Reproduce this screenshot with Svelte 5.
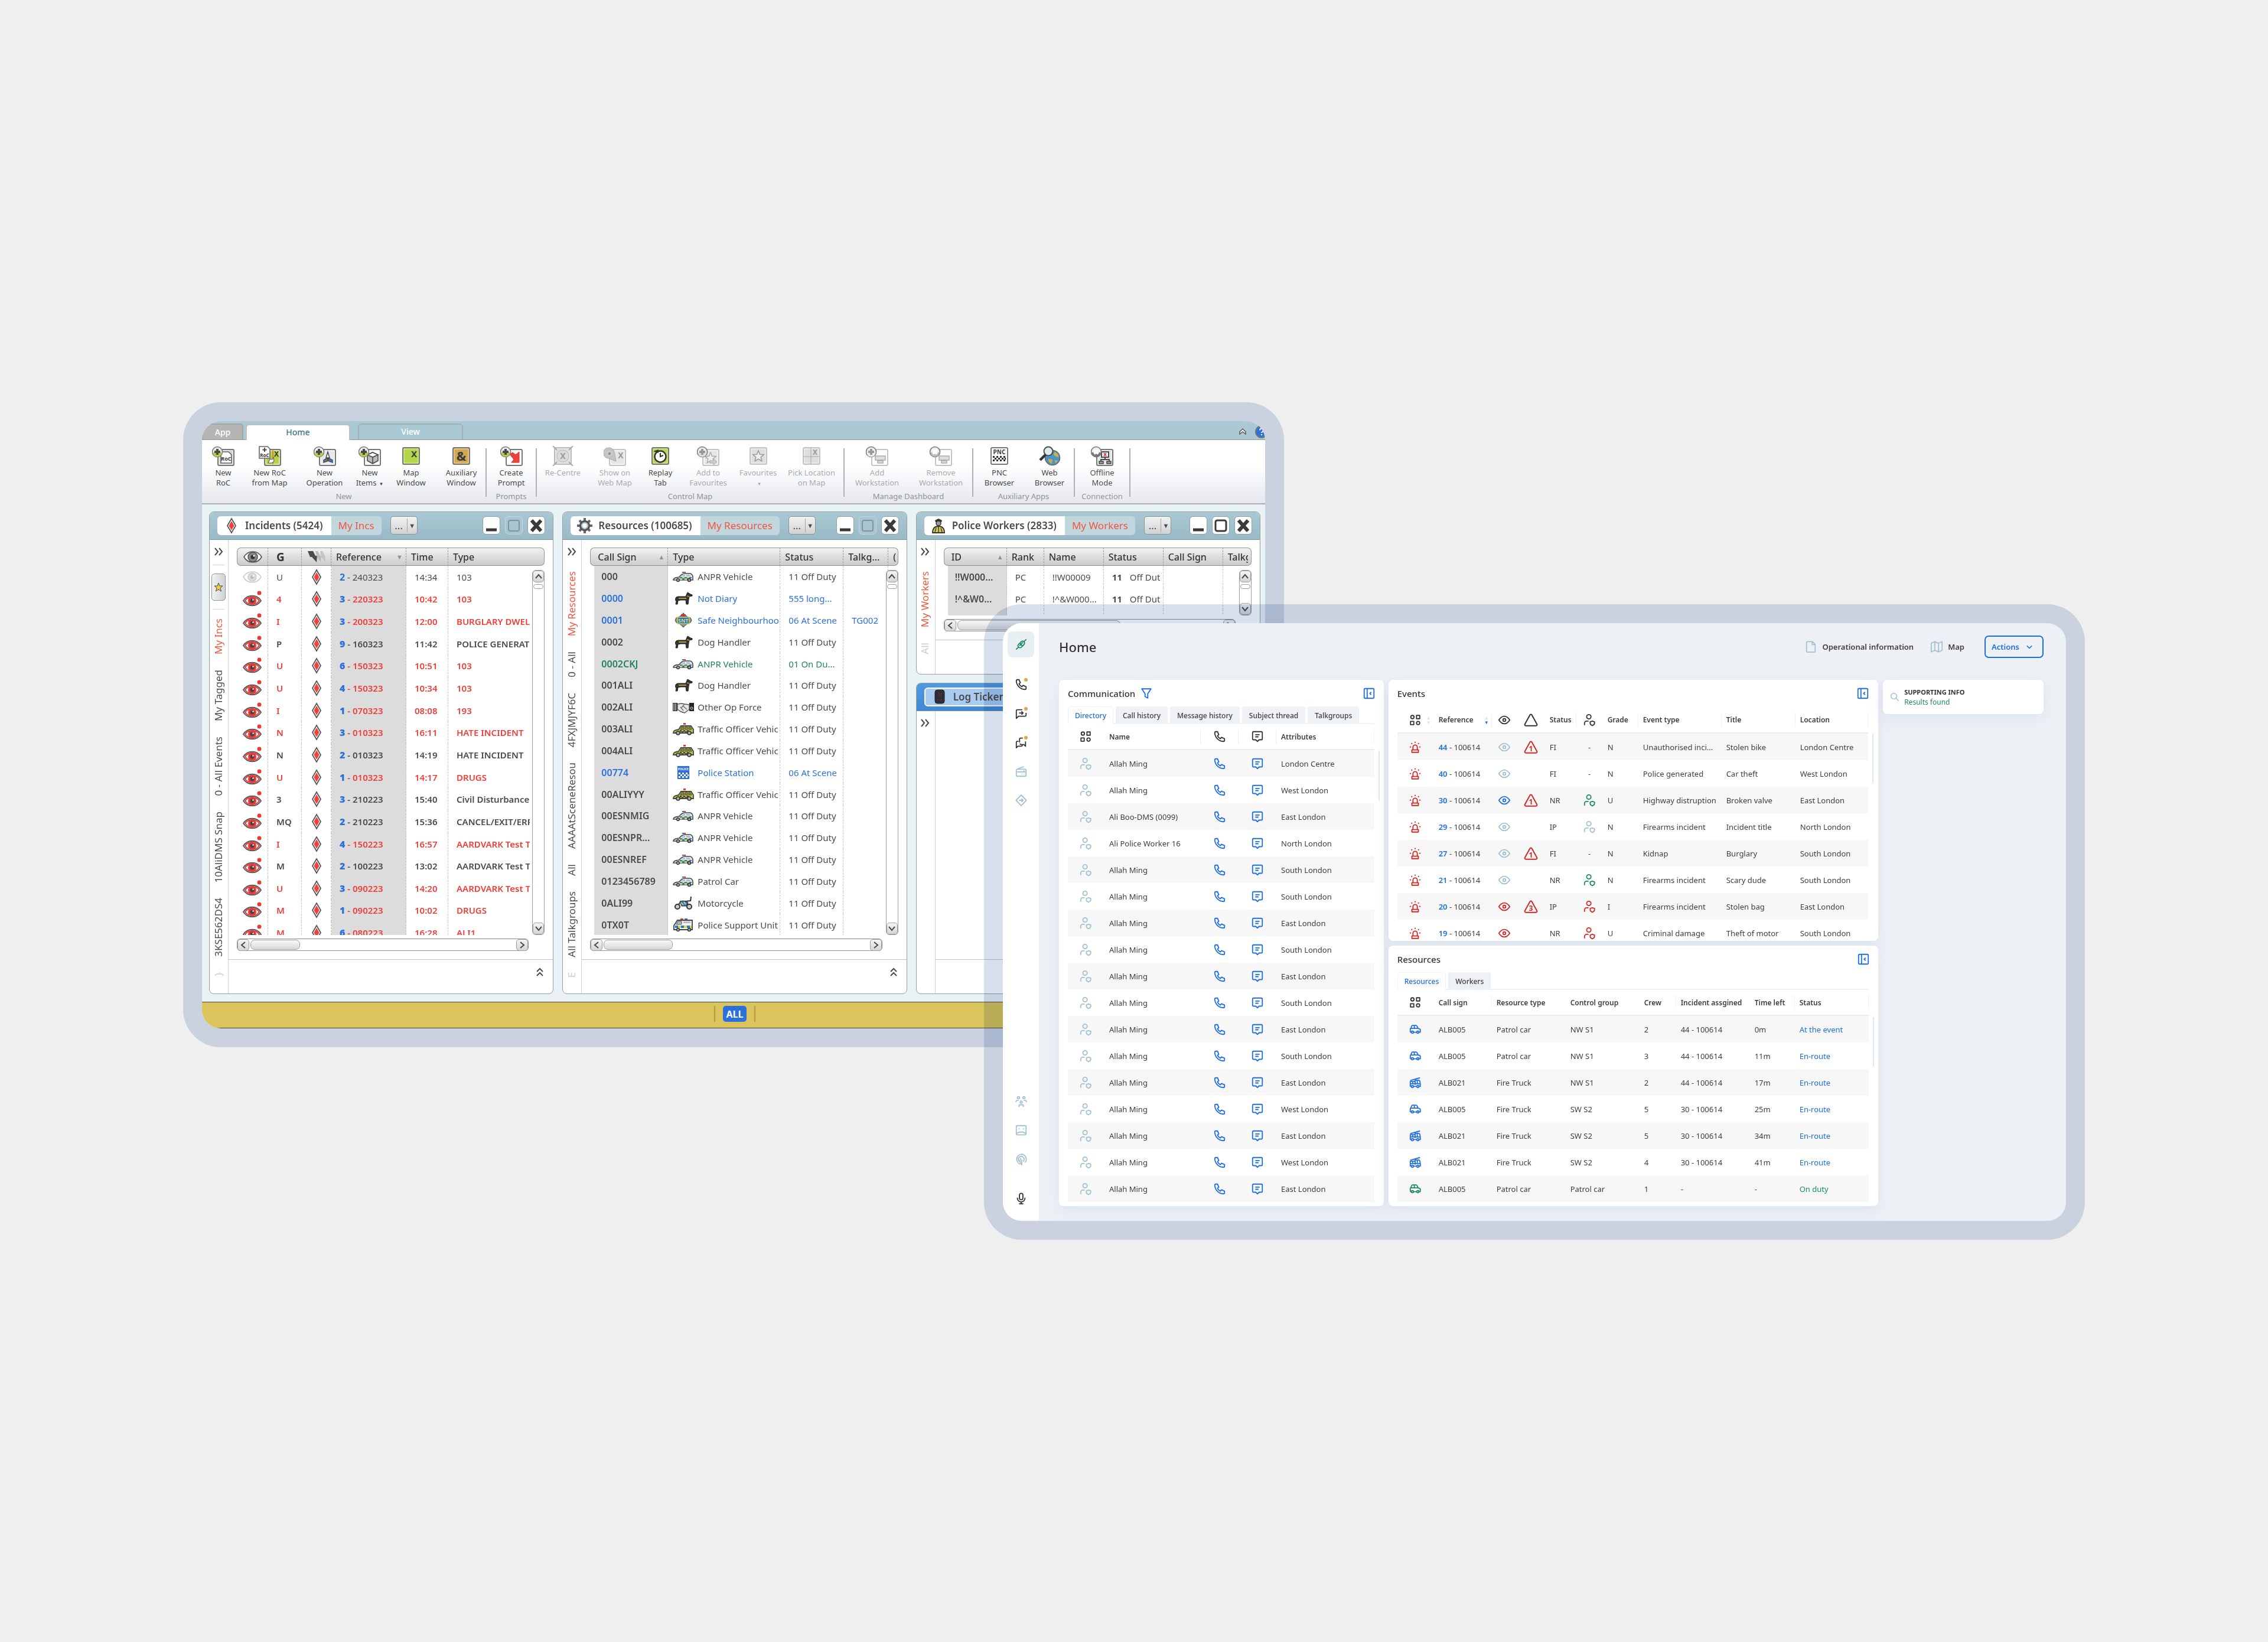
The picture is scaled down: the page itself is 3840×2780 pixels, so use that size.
<script lang="ts">
    type Shape = { d?: string; f?: string; s?: string; w?: number; t?: string; x?: number; y?: number; size?: number }

    const dark = "#4a4a4a"

    const box = (x: number, y: number, w: number, h: number, r: number) =>
        `M${x + r} ${y}h${w - 2 * r}a${r} ${r} 0 0 1 ${r} ${r}v${h - 2 * r}a${r} ${r} 0 0 1 ${-r} ${r}h${2 * r - w}a${r} ${r} 0 0 1 ${-r} ${-r}v${2 * r - h}a${r} ${r} 0 0 1 ${r} ${-r}z`
    const dot = (x: number, y: number, r: number) =>
        `M${x - r} ${y}a${r} ${r} 0 1 0 ${2 * r} 0a${r} ${r} 0 1 0 ${-2 * r} 0z`

    // Ribbon icons, 38 x 34
    const tile = (fill: string, stroke = "#777"): Shape[] => [
        { d: box(10, 6, 27, 27, 2), f: fill, s: stroke, w: 2 },
        { d: box(12, 8, 23, 23, 1), s: "#fff", w: 1 },
    ]
    const solo = (fill: string, stroke = "#777"): Shape[] => [
        { d: box(5, 3, 28, 28, 2), f: fill, s: stroke, w: 2 },
        { d: box(7, 5, 24, 24, 1), s: "#ffffff99", w: 1 },
    ]
    const badge = (low: string, ink: string, sign: string): Shape[] => [
        { d: dot(9, 10, 8.5), f: "#eee", s: "#777", w: 1.6 },
        { d: "M1.5 11a7.5 7.5 0 0 0 15 0z", f: low },
        { d: sign, s: ink, w: 4 },
    ]
    const plus = "M9 5v10M4 10h10"
    const cross = "M5.5 6.5l7 7M12.5 6.5l-7 7"
    const starAt = (x: number, y: number) =>
        `M${x} ${y - 9}l2.6 6.2 6.6.5-5 4.4 1.5 6.5-5.7-3.5-5.7 3.5 1.5-6.5-5-4.4 6.6-.5z`

    const ribbonArt: Record<string, Shape[]> = {
        roc: [...tile("#cfcfcf"), { d: "M15 10h13l5 5v14H15z", f: "#fff", s: "#666", w: 1.6 }, { t: "RoC", x: 24, y: 25, size: 9 }, ...badge("#b5cf45", dark, plus)],
        rocMap: [...tile("#b4d548"), { d: "M24 7v24", s: "#e83a36", w: 1 }, { d: "M20 19h16", s: "#d3a43f", w: 1 }, { t: "X", x: 30, y: 18, size: 12 }, { d: "M16 29l3-7 4 1 2-4 1 7-4 3z", f: "#fff", s: dark, w: 1 }, { d: "M1 1h14l4 4v16H1z", f: "#fff", s: "#666", w: 1.6 }, { d: "M10 3v7M6.5 6.5h7", s: dark, w: 2 }, { t: "RoC", x: 10, y: 19, size: 8 }],
        operation: [...tile("#e6e8ee"), { d: "M24 20l-7 4v4l8-3zM24 20l8 4v4l-8-3z", f: "#777", s: dark, w: 1.5 }, { d: "M26 22l6 3v3l-5-3z", f: "#2b70dc" }, { d: "M24 10l-3 10h6z", f: "#fff", s: dark, w: 1.5 }, ...badge("#b5cf45", dark, plus)],
        items: [...tile("#fff"), { d: "M24 11l9 4v10l-9 5-9-5V15z", f: "#bbb", s: dark, w: 1.6 }, { d: "M24 11l9 4-9 4-9-4z", f: "#fff", s: dark, w: 1.6 }, { d: "M24 19v11", s: dark, w: 1.6 }, ...badge("#b5cf45", dark, plus)],
        map: [...solo("#b4d548"), { t: "X", x: 24, y: 19, size: 15 }],
        aux: [...solo("#d2a951"), { t: "&", x: 19, y: 25, size: 22 }],
        prompt: [...tile("#fff"), { d: "M16 14l5-3 5 4 6-5v18H19l4-5z", f: "#f0413b", s: "#c33", w: 1 }, ...badge("#b5cf45", dark, plus)],
        recentre: [...solo("#dcdcdc", "#bbb"), { d: "M2 0l7 7M36 0l-7 7M2 34l7-7M36 34l-7-7", s: "#aaa", w: 2 }, { d: dot(19, 17, 10), s: "#bbb", w: 1 }, { t: "X", x: 19, y: 22, size: 14, f: "#999" }],
        show: [...tile("#e6e6e6", "#c4c4c4"), { t: "X", x: 29, y: 21, size: 14, f: "#999" }, { d: "M9 3a9 9 0 0 1 9 7l3 16-13-5A9 9 0 0 1 9 3z", f: "#c3c3c3", s: "#aaa", w: 1 }, { d: dot(10, 13, 3.5), f: "#999", s: "#eee", w: 1 }],
        replay: [...solo("#b4d548"), { d: dot(19, 18, 9.5), f: "#fff", s: "#333", w: 2.4 }, { d: "M19 12v6l5-2", s: "#333", w: 2 }, { d: "M7 9l9-3v6z", f: "#333" }],
        addFav: [...tile("#e6e6e6", "#c4c4c4"), { d: starAt(23, 20), f: "#eee", s: "#aaa", w: 1.5 }, { d: "M22 25h6v-3l6 5-6 5v-3h-6z", f: "#ccc", s: "#aaa", w: 1 }, ...badge("#ddd", "#999", plus)],
        fav: [...solo("#dedede", "#c4c4c4"), { d: starAt(19, 17), f: "#eee", s: "#999", w: 1.5 }],
        pick: [...solo("#dedede", "#c4c4c4"), { d: "M18 4v26M6 18h26", s: "#bbb", w: 1.5 }, { t: "X", x: 25, y: 15, size: 12, f: "#999" }],
        addWork: [...tile("#fff", "#c4c4c4"), { d: "M16 17h17v7H16zM20 25h9v4h-9z", f: "#ddd", s: "#aaa", w: 1.5 }, ...badge("#eee", "#999", plus)],
        removeWork: [...tile("#fff", "#c4c4c4"), { d: "M16 17h17v7H16zM20 25h9v4h-9z", f: "#ddd", s: "#aaa", w: 1.5 }, ...badge("#bbb", "#fff", cross)],
        pnc: [...solo("#fff"), { t: "PNC", x: 19, y: 14, size: 10 }, { d: "M8 17h3v3H8zM14 17h3v3h-3zM20 17h3v3h-3zM26 17h3v3h-3zM11 20h3v3h-3zM17 20h3v3h-3zM23 20h3v3h-3zM28 20h2v3h-2zM8 23h3v3H8zM14 23h3v3h-3zM20 23h3v3h-3zM26 23h3v3h-3z", f: "#333" }],
        web: [{ d: dot(24, 20, 12.5), f: "#4c94c4", s: "#666", w: 1.5 }, { d: "M27 10c5 1 8 5 7 9l-4-1-4-3zM17 22l7 1-1 7c-4-1-6-4-6-8zM28 24l5 1-4 5z", f: "#d0ad4d" }, { d: dot(17, 9, 7.5), f: "#dfe9ee", s: dark, w: 2 }, { d: "M12 15l-9 9", s: "#333", w: 4.5 }],
        offline: [...tile("#e4e4e8"), { d: "M18 10h12v9H18z", f: "#fff", s: dark, w: 2 }, { d: "M22 12l4 5M26 12l-4 5", s: "#e83a36", w: 2 }, { d: "M24 19v4M17 28v-5h14v5", s: dark, w: 2 }, { d: "M14 26h7v4h-7zM27 26h7v4h-7z", f: "#999", s: dark, w: 1.5 }, ...badge("#777", "#fff", cross)],
    }

    const wheels = (y: number, r = 3): Shape[] => [
        { d: dot(9, y, r), f: "#aaa", s: "#333", w: 1.5 },
        { d: dot(28, y, r), f: "#aaa", s: "#333", w: 1.5 },
    ]

    // Resource icons, 36 x 24
    const unitArt: Record<string, Shape[]> = {
        car: [{ d: "M16 4h3v2h-3z", f: "#2b70dc" }, { d: "M19 4h3v2h-3z", f: "#e83a36" }, { d: "M1 18c0-3 3-4 10-5 3-4 6-6 10-6h8c3 0 5 3 5 6v5z", f: "#e8ecee", s: "#444", w: 1.6 }, { d: "M14 12c2-2 4-3 7-3v3zM23 9h5l3 3h-8z", f: "#a9bfca" }, { d: "M12 13h4v2h-4zM20 13h4v2h-4zM16 15h4v3h-4zM28 13h4v2h-4zM24 15h4v2h-4z", f: "#2b70dc" }, { d: "M16 13h4v2h-4zM24 13h4v2h-4zM12 15h4v3h-4zM20 15h4v3h-4z", f: "#c9d544" }, ...wheels(18, 2.5)],
        dog: [{ d: "M5 22l1-5c-2-1-2-5 0-7l3-1h13l3-7 2 1 3 2 3 1v2l-5 1-1 5-1 8h-3l-1-7h-9l-4 1-1 6z", f: "#333", s: "#222", w: 1 }, { d: "M10 12h13", s: "#d9b647", w: 1.6 }, { d: "M24 8l4 1", s: "#c9953c", w: 1.6 }],
        badge: [{ d: "M18 0l3 3 5 4 4 1 2 4-2 4-4 1-5 4-3 3-3-3-5-4-4-1-2-4 2-4 4-1 5-4z", f: "#8a8f8a", s: "#444", w: 1 }, { d: "M14 2h8v4h-8z", f: "#c43a36" }, { d: "M8 7h20v11H8z", f: "#2b70dc", s: "#c9d544", w: 1.6 }, { t: "SNT", x: 18, y: 16, size: 9, f: "#dfe45a" }],
        hands: [{ d: "M0 5h8v14H0z", f: "#333" }, { d: "M2 6v12M5 6v12", s: "#fff", w: 1 }, { d: "M28 5h8v14h-8z", f: "#222" }, { d: "M8 7l7-1 5 1 8 1v8l-8 6-6-2-6-4z", f: "#e6e6e6", s: "#555", w: 1.4 }, { d: "M13 12l5 6M17 10l7 6M20 7l-5 6", s: "#666", w: 1.3 }, { d: dot(32, 14, 2), s: "#ddd", w: 1 }],
        traffic: [{ d: "M18 2h4v3h-4z", f: "#e83a36" }, { d: "M1 19c0-4 3-5 9-6l4-6h17l4 6v6z", f: "#c3c83a", s: "#444", w: 1.8 }, { d: "M15 9h4v4h-6zM21 9h4v4h-4zM27 9h3l2 4h-5z", f: "#8d9140", s: "#444", w: 1 }, { d: "M12 14h3v3h-3zM18 14h3v3h-3zM24 14h3v3h-3zM15 16h3v3h-3zM21 16h3v3h-3z", f: dark }, ...wheels(19)],
        station: [{ d: "M8 1h20v22H8z", f: "#2b70dc" }, { t: "POLICE", x: 18, y: 8, size: 5, f: "#fff" }, { d: "M10 12h3v3h-3zM16 12h3v3h-3zM22 12h3v3h-3zM13 15h3v3h-3zM19 15h3v3h-3zM25 15h2v3h-2zM10 18h3v3h-3zM16 18h3v3h-3zM22 18h3v3h-3z", f: "#fff" }],
        bike: [{ d: "M8 17l6-8h8l6 8M22 9l8-1M31 1l-1 8", s: "#333", w: 2 }, { d: "M12 9l6-1 8 3-3 6h-8z", f: "#2b70dc", s: "#333", w: 1 }, { d: "M14 11l4 4M19 10l3 4", s: "#c9d544", w: 2.2 }, { d: dot(8, 18, 4), f: "#ccc", s: "#333", w: 2 }, { d: dot(28, 18, 4), f: "#ccc", s: "#333", w: 2 }],
        van: [{ d: "M13 1h5v2h-5z", f: "#e83a36" }, { d: "M20 1h5v2h-5z", f: "#2b70dc" }, { d: "M2 20v-7l6-9h25v16z", f: "#f2f2f2", s: "#444", w: 1.8 }, { d: "M9 6h6v5H6z", f: "#a9bfca", s: "#555", w: 1 }, { d: "M18 6h12v3H18z", f: "#bbb" }, { d: "M4 13h5v4H4zM14 13h5v4h-5zM24 13h5v4h-5z", f: "#2b70dc" }, { d: "M9 13h5v4H9zM19 13h5v4h-5zM29 13h3v4h-3z", f: "#d6dd42" }, ...wheels(20, 2.5)],
    }

    // Small marks used in the window bars and the incident list, 32 x 28
    const eyeShape = "M1 14C8 2 24 2 31 14C24 26 8 26 1 14z"
    const markArt: Record<string, Shape[]> = {
        eyeHead: [{ d: eyeShape, f: "#fff", s: "#555", w: 1.6 }, { d: dot(16, 14, 8), f: "#888", s: "#555", w: 1.5 }, { d: dot(16, 14, 3.5), f: "#333" }, { d: dot(18, 12, 1.5), f: "#fff" }],
        eyeOff: [{ d: eyeShape, f: "#fff", s: "#ccc", w: 1.6 }, { d: dot(16, 14, 7), f: "#ddd", s: "#ccc", w: 1.5 }, { d: dot(16, 14, 3), f: "#bbb" }, { d: dot(18, 12, 1.5), f: "#fff" }],
        eyeOn: [{ d: "M1 17C8 6 24 6 31 17C24 28 8 28 1 17z", f: "#fff", s: "#555", w: 1.8 }, { d: "M4 17C9 9 23 9 28 17C23 25 9 25 4 17z", s: "#e83a36", w: 2 }, { d: dot(16, 17, 7), f: "#e83a36" }, { d: dot(16, 17, 3.5), f: "#444" }, { d: dot(17.5, 15.5, 1.2), f: "#fff" }, { d: dot(28, 4, 3.5), f: "#e83a36" }],
        diamond: [{ d: "M16 2l7 12-7 12-7-12z", f: "#fff", s: "#555", w: 1.8 }, { d: "M16 6l4.5 8-4.5 8-4.5-8z", f: "#f0413b" }],
        bolts: [{ d: "M1 4h9l4 8h3l-1 11-8-9H5z", f: "#4a4a4a" }, { d: "M14 4h4l4 8h2l-1 11-6-9z", f: "#bbb" }, { d: "M22 4h4l4 8h1v11l-7-9z", f: "#c4c4c4" }],
        gear: [{ d: "M16 1v5M16 22v5M3 14h5M24 14h5M7 5l4 4M21 19l4 4M25 5l-4 4M11 19l-4 4", s: "#666", w: 4 }, { d: dot(16, 14, 7.5), f: "#fff", s: "#555", w: 3.5 }, { d: dot(16, 14, 4.5), s: "#9fc4d0", w: 1.5 }],
        officer: [{ d: "M10 5l6-3 6 3-1 3H11z", f: "#333" }, { d: dot(16, 10, 4), f: "#999", s: "#333", w: 1.5 }, { d: "M6 26c0-8 4-11 10-11s10 3 10 11z", f: "#d5cf48", s: "#333", w: 1.8 }, { d: "M16 16v9M12 18l-2 7M20 18l2 7", s: "#555", w: 1.8 }],
        ticker: [{ d: box(8, 2, 16, 23, 4), f: "#2d2d33", s: "#222", w: 1 }, { d: "M14 8h1M18 8h1M14 12h1M18 12h1M16 10h1M12 19h1M16 19h1M19 19h1", s: "#a33", w: 1.5 }],
    }

    // Line icons, 24 x 24
    const line: Record<string, string> = {
        plug: "M2.5 21.5l5-5M16.5 7.5l5-5M7 17c-2-2-1-4 .5-5.5L12 7c2-1.500 4-1.500 5 0 1.500 1.500 1.500 3.500 0 5.500L12.500 17c-1.500 1.500-4 1.500-5.500 0zM9.500 10l5 5M15 8l-6 6.500",
        phone: "M5 3h3l2.500 5.500-2.500 2c1 2.500 2.800 4.300 5.300 5.500l2.200-2.500L21 16v3a2 2 0 0 1-2 2C10 21 3 13 3 5a2 2 0 0 1 2-2z",
        chatIn: "M14 5H5a2 2 0 0 0-2 2v14l4-4h12a2 2 0 0 0 2-2v-4M8 11h7M12.500 8l3 3-3 3",
        chats: "M9 12V6a2 2 0 0 1 2-2h4M20 10v9l-3-3h-5a2 2 0 0 1-2-2M7 10H5a2 2 0 0 0-2 2v10l3-3h6a2 2 0 0 0 2-2v-1",
        radio: "M5 8h14a2 2 0 0 1 2 2v9a2 2 0 0 1-2 2H5a2 2 0 0 1-2-2v-9a2 2 0 0 1 2-2zM4 8l13-5M3 13h18M13 17h1M17 17h1M17 10v3",
        route: "M12 2l9.500 10L12 22 2.500 12zM8 12h7M12.500 9l3 3-3 3",
        people: "M7 3a2 2 0 1 0 0 4 2 2 0 0 0 0-4zM17 3a2 2 0 1 0 0 4 2 2 0 0 0 0-4zM12 11a2 2 0 1 0 0 4 2 2 0 0 0 0-4zM2.500 13v-1.500A2 2 0 0 1 4.500 10h3M21.500 13v-1.500A2 2 0 0 0 19.500 10h-3M8 22v-2a2 2 0 0 1 2-2h4a2 2 0 0 1 2 2v2",
        contact: "M5 3h14a2 2 0 0 1 2 2v13a2 2 0 0 1-2 2H5a2 2 0 0 1-2-2V5a2 2 0 0 1 2-2zM3 18l5-3h8l5 3M8 8v2M16 8v2",
        podcast: "M10 20.500A9.300 9.300 0 0 1 12 2.500a9.300 9.300 0 0 1 7 15.500M8.500 16A5.500 5.500 0 1 1 15.500 16M12 10a2 2 0 0 0-2 2v6l3 4v-10",
        mic: "M12 2.500a3.200 3.200 0 0 0-3.200 3.200v5.600a3.200 3.200 0 0 0 6.400 0V5.700A3.200 3.200 0 0 0 12 2.500zM5 10.500v1a7 7 0 0 0 14 0v-1M12 18.500v3.500M8 22h8",
        funnel: "M3.500 3.500h17l-6 9v8l-5-2.500v-5.500z",
        collapse: "M5 3h14a2 2 0 0 1 2 2v14a2 2 0 0 1-2 2H5a2 2 0 0 1-2-2V5a2 2 0 0 1 2-2zM8.500 3v18M16 9.500L13.500 12l2.500 2.500",
        grid: "M7 3.500a3 3 0 1 0 0 6 3 3 0 0 0 0-6zM14.500 3.500h6v6h-6zM3.500 14.500h6v6h-6zM17.500 14.500a3 3 0 1 0 0 6 3 3 0 0 0 0-6z",
        message: "M5 3h14a2 2 0 0 1 2 2v11a2 2 0 0 1-2 2h-4l-3 3-3-3H5a2 2 0 0 1-2-2V5a2 2 0 0 1 2-2zM8 8.500h8M8 12.500h6",
        person: "M11 2a3.500 3.500 0 1 0 0 8 3.500 3.500 0 0 0 0-8zM3 21.500V18a4 4 0 0 1 4-4h3.500M17.500 14l4 1.300v2.700c0 2-1.500 3.300-4 4.300-2.500-1-4-2.300-4-4.300v-2.700z",
        eye: "M2 12C5.500 6.500 8.500 5 12 5s6.500 1.500 10 7c-3.500 5.500-6.500 7-10 7S5.500 17.500 2 12zM12 9.500a2.500 2.500 0 1 0 0 5 2.500 2.500 0 0 0 0-5z",
        triangle: "M10.500 3.200L1.800 19a1.800 1.800 0 0 0 1.600 2.700h17.200a1.800 1.800 0 0 0 1.600-2.700L13.500 3.200a1.800 1.800 0 0 0-3 0z",
        siren: "M8 16.500V12a4 4 0 0 1 8 0v4.500M6 17h12v4.500H6zM12 2v2M5 4.500l1.500 1.500M19 4.500L17.500 6M2 11.500h2.500M19.500 11.500H22",
        car: "M3 17v-5.500a1.500 1.500 0 0 1 1-1.500l1.500-4A2 2 0 0 1 7.400 4.500h6.200a2 2 0 0 1 1.800 1.200L17.500 10l3 1a1.500 1.500 0 0 1 1 1.500V17H19M3 17h2M9 17h6M4 10h14M10.500 4.500V10M7 15a2 2 0 1 0 0 4 2 2 0 0 0 0-4zM17 15a2 2 0 1 0 0 4 2 2 0 0 0 0-4z",
        truck: "M3 19v-9h9V7.500h6.500a2 2 0 0 1 2 1.500L21.500 14v5H19M3 19h2M9 19h6M12 10v6M3 14h18M7.500 10v5M16 8v6M7 17a2 2 0 1 0 0 4 2 2 0 0 0 0-4zM17 17a2 2 0 1 0 0 4 2 2 0 0 0 0-4zM3 8l18-5",
        doc: "M6 2.500h9l5 5V20a2 2 0 0 1-2 2H6a2 2 0 0 1-2-2V4.500a2 2 0 0 1 2-2zM14.500 3v5H20",
        mapFold: "M2 5.500l6.500-3 7 3 6.500-3v16l-6.500 3-7-3-6.500 3zM8.500 2.500v16M15.500 5.500v16",
        search: "M10 3.500a6.500 6.500 0 1 0 0 13 6.500 6.500 0 0 0 0-13zM15 15l6 6",
        down: "M7 10l5 5 5-5",
    }

    type Tool = { art: string; label: string[]; off?: boolean; menu?: boolean }
    const ribbon: { id: string; name: string; tools: Tool[] }[] = [
        { id: "new", name: "New", tools: [
            { art: "roc", label: ["New", "RoC"] },
            { art: "rocMap", label: ["New RoC", "from Map"] },
            { art: "operation", label: ["New", "Operation"] },
            { art: "items", label: ["New", "Items"], menu: true },
            { art: "map", label: ["Map", "Window"] },
            { art: "aux", label: ["Auxiliary", "Window"] },
        ] },
        { id: "prompts", name: "Prompts", tools: [{ art: "prompt", label: ["Create", "Prompt"] }] },
        { id: "control", name: "Control Map", tools: [
            { art: "recentre", label: ["Re-Centre"], off: true },
            { art: "show", label: ["Show on", "Web Map"], off: true },
            { art: "replay", label: ["Replay", "Tab"] },
            { art: "addFav", label: ["Add to", "Favourites"], off: true },
            { art: "fav", label: ["Favourites", ""], off: true, menu: true },
            { art: "pick", label: ["Pick Location", "on Map"], off: true },
        ] },
        { id: "dashboard", name: "Manage Dashboard", tools: [
            { art: "addWork", label: ["Add", "Workstation"], off: true },
            { art: "removeWork", label: ["Remove", "Workstation"], off: true },
        ] },
        { id: "apps", name: "Auxiliary Apps", tools: [
            { art: "pnc", label: ["PNC", "Browser"] },
            { art: "web", label: ["Web", "Browser"] },
        ] },
        { id: "connection", name: "Connection", tools: [{ art: "offline", label: ["Offline", "Mode"] }] },
    ]

    // grade, number, date, time, type, tone
    const incidents = [
        ["U", "2", "240323", "14:34", "103", "read"],
        ["4", "3", "220323", "10:42", "103", "alert"],
        ["I", "3", "200323", "12:00", "BURGLARY DWEL", "alert"],
        ["P", "9", "160323", "11:42", "POLICE GENERAT", "plain"],
        ["U", "6", "150323", "10:51", "103", "alert"],
        ["U", "4", "150323", "10:34", "103", "alert"],
        ["I", "1", "070323", "08:08", "193", "alert"],
        ["N", "3", "010323", "16:11", "HATE INCIDENT", "alert"],
        ["N", "2", "010323", "14:19", "HATE INCIDENT", "plain"],
        ["U", "1", "010323", "14:17", "DRUGS", "alert"],
        ["3", "3", "210223", "15:40", "Civil Disturbance", "plain"],
        ["MQ", "2", "210223", "15:36", "CANCEL/EXIT/ERR", "plain"],
        ["I", "4", "150223", "16:57", "AARDVARK Test T", "alert"],
        ["M", "2", "100223", "13:02", "AARDVARK Test T", "plain"],
        ["U", "3", "090223", "14:20", "AARDVARK Test T", "alert"],
        ["M", "1", "090223", "10:02", "DRUGS", "alert"],
        ["M", "6", "080223", "16:28", "ALI1", "alert"],
    ]

    // call sign, art, type, status, talkgroup, tone
    const units = [
        ["000", "car", "ANPR Vehicle", "11 Off Duty", "", ""],
        ["0000", "dog", "Not Diary", "555 long...", "", "blue"],
        ["0001", "badge", "Safe Neighbourhoo", "06 At Scene", "TG002", "blue"],
        ["0002", "dog", "Dog Handler", "11 Off Duty", "", ""],
        ["0002CKJ", "car", "ANPR Vehicle", "01 On Du...", "", "green"],
        ["001ALI", "dog", "Dog Handler", "11 Off Duty", "", ""],
        ["002ALI", "hands", "Other Op Force", "11 Off Duty", "", ""],
        ["003ALI", "traffic", "Traffic Officer Vehic", "11 Off Duty", "", ""],
        ["004ALI", "traffic", "Traffic Officer Vehic", "11 Off Duty", "", ""],
        ["00774", "station", "Police Station", "06 At Scene", "", "blue"],
        ["00ALIYYY", "traffic", "Traffic Officer Vehic", "11 Off Duty", "", ""],
        ["00ESNMIG", "car", "ANPR Vehicle", "11 Off Duty", "", ""],
        ["00ESNPR...", "car", "ANPR Vehicle", "11 Off Duty", "", ""],
        ["00ESNREF", "car", "ANPR Vehicle", "11 Off Duty", "", ""],
        ["0123456789", "car", "Patrol Car", "11 Off Duty", "", ""],
        ["0ALI99", "bike", "Motorcycle", "11 Off Duty", "", ""],
        ["0TX0T", "van", "Police Support Unit", "11 Off Duty", "", ""],
    ]

    const workers = [
        ["!!W000...", "PC", "!!W00009"],
        ["!^&W0...", "PC", "!^&W000..."],
        ["", "", ""],
    ]

    const directory = [
        ["Allah Ming", "London Centre"],
        ["Allah Ming", "West London"],
        ["Ali Boo-DMS (0099)", "East London"],
        ["Ali Police Worker 16", "North London"],
        ...["South", "South", "East", "South", "East", "South", "East", "South", "East", "West", "East", "West", "East"].map(
            (area) => ["Allah Ming", `${area} London`],
        ),
    ]

    // reference, eye tone, warnings, status, person tone, grade, type, title, location
    const events = [
        ["44", "pale", "1", "FI", "", "N", "Unauthorised inci...", "Stolen bike", "London Centre"],
        ["40", "pale", "", "FI", "", "N", "Police generated", "Car theft", "West London"],
        ["30", "blue", "1", "NR", "green", "U", "Highway distruption", "Broken valve", "East London"],
        ["29", "pale", "", "IP", "pale", "N", "Firearms incident", "Incident title", "North London"],
        ["27", "pale", "1", "FI", "", "N", "Kidnap", "Burglary", "South London"],
        ["21", "pale", "", "NR", "green", "N", "Firearms incident", "Scary dude", "South London"],
        ["20", "red", "3", "IP", "red", "I", "Firearms incident", "Stolen bag", "East London"],
        ["19", "red", "", "NR", "red", "U", "Criminal damage", "Theft of motor", "South London"],
    ]

    // icon, call sign, type, group, crew, incident, time, status, tone
    const fleet = [
        ["car", "ALB005", "Patrol car", "NW S1", "2", "44 - 100614", "0m", "At the event", "blue"],
        ["car", "ALB005", "Patrol car", "NW S1", "3", "44 - 100614", "11m", "En-route", "blue"],
        ["truck", "ALB021", "Fire Truck", "NW S1", "2", "44 - 100614", "17m", "En-route", "blue"],
        ["car", "ALB005", "Fire Truck", "SW S2", "5", "30 - 100614", "25m", "En-route", "blue"],
        ["truck", "ALB021", "Fire Truck", "SW S2", "5", "30 - 100614", "34m", "En-route", "blue"],
        ["truck", "ALB021", "Fire Truck", "SW S2", "4", "30 - 100614", "41m", "En-route", "blue"],
        ["car", "ALB005", "Patrol car", "Patrol car", "1", "-", "-", "On duty", "green"],
    ]

    const commTabs = ["Directory", "Call history", "Message history", "Subject thread", "Talkgroups"]
    let commTab = $state("Directory")
    const fleetTabs = ["Resources", "Workers"]
    let fleetTab = $state("Resources")
</script>

{#snippet art(shapes: Shape[], w: number, h: number)}
    <svg width={w} height={h} viewBox="0 0 {w} {h}" fill="none" aria-hidden="true">
        {#each shapes as p}
            {#if p.t}
                <text x={p.x} y={p.y} font-size={p.size} font-weight="700" text-anchor="middle" fill={p.f ?? "#3a3a3a"}>{p.t}</text>
            {:else}
                <path d={p.d} fill={p.f ?? "none"} stroke={p.s ?? "none"} stroke-width={p.w ?? 0} />
            {/if}
        {/each}
    </svg>
{/snippet}

{#snippet icon(name: string, tone = "ink", size = 22)}
    <svg class="line {tone}" width={size} height={size} viewBox="0 0 24 24" aria-hidden="true">
        <path d={line[name]} />
    </svg>
{/snippet}

{#snippet titleBar(shapes: Shape[], name: string, view: string, canMax: boolean)}
    <header class="titlebar">
        <h2 class="chip">{@render art(shapes, 32, 28)}{name}</h2>
        <button class="chip-view">{view}</button>
        <button class="more" aria-label="More views"><span>...</span><i>▼</i></button>
        <div class="controls">
            <button aria-label="Minimise"><svg width="24" height="24"><path d="M3 19h18" stroke="#3a3a3a" stroke-width="5" /></svg></button>
            <button aria-label="Maximise" class:ghost={!canMax}><svg width="24" height="24"><path d={box(3, 3, 18, 18, 3)} stroke={canMax ? "#3a3a3a" : "#80949d"} stroke-width={canMax ? 3 : 2} fill="none" /></svg></button>
            <button aria-label="Close"><svg width="24" height="24"><path d="M4 3l16 18M20 3L4 21" stroke="#3a3a3a" stroke-width="6" /></svg></button>
        </div>
    </header>
{/snippet}

{#snippet vbar()}
    <div class="vbar" aria-hidden="true">
        <span class="knob"><svg width="14" height="14"><path d="M2 10l5-6 5 6" /></svg></span>
        <span class="grip"></span>
        <span class="knob end"><svg width="14" height="14"><path d="M2 4l5 6 5-6" /></svg></span>
    </div>
{/snippet}

{#snippet hbar(size: string)}
    <div class="hbar {size}" aria-hidden="true">
        <span class="knob"><svg width="14" height="14"><path d="M10 2L4 7l6 5" /></svg></span>
        <span class="grip"></span>
        <span class="knob end"><svg width="14" height="14"><path d="M4 2l6 5-6 5" /></svg></span>
    </div>
{/snippet}

{#snippet footer(open = true)}
    <footer class="foot">
        {#if open}
            <button class="expand" aria-label="Expand details"><svg width="14" height="18"><path d="M2 8l5-5 5 5M2 15l5-5 5 5" /></svg></button>
        {/if}
    </footer>
{/snippet}

{#snippet strip(views: string[], tail: string, favourite: boolean)}
    <nav class="strip">
        <button class="open" aria-label="Show views"><svg width="18" height="14"><path d="M3 1l5 6-5 6M10 1l5 6-5 6" /></svg></button>
        {#if favourite}
            <div class="pinned">
                <button class="fav" aria-label="Favourites"><svg width="18" height="18"><path d="M9 2l2 5h5l-4 3.500 1.500 5.500L9 13l-4.500 3L6 10.500 2 7h5z" /></svg></button>
            </div>
        {/if}
        {#each views as view, i}
            <button class="view" class:current={i === 0}>{view}</button>
        {/each}
        {#if tail}<span class="view faded">{tail}</span>{/if}
    </nav>
{/snippet}

<main class="stage">
    <section class="device legacy">
        <div class="screen">
            <nav class="tabs">
                <button class="app">App</button>
                <button class="home">Home</button>
                <button class="view-tab">View</button>
                <div class="corner">
                    <svg width="14" height="14"><path d="M2 11V7l5-5 5 5v4L7 7z" fill="#fff" stroke="#555" stroke-width="1.500" /></svg>
                    <svg width="24" height="24"><circle cx="12" cy="12" r="10" fill="#2b70dc" stroke="#777" stroke-width="2" /><path d="M9 9.500a3 3 0 1 1 4 2.800c-.8.400-1 .9-1 1.700M12 16v2" fill="none" stroke="#fff" stroke-width="2" /></svg>
                </div>
            </nav>

            <div class="ribbon">
                {#each ribbon as group}
                    <div class="group">
                        <div class="tools {group.id}">
                            {#each group.tools as tool}
                                <button class="tool" class:off={tool.off}>
                                    {@render art(ribbonArt[tool.art], 38, 34)}
                                    <span>{tool.label[0]}</span>
                                    {#if tool.label.length > 1}
                                        <span>{tool.label[1]}{#if tool.menu}<i>▼</i>{/if}</span>
                                    {/if}
                                </button>
                            {/each}
                        </div>
                        <p>{group.name}</p>
                    </div>
                    <span class="rule"></span>
                {/each}
            </div>

            <div class="workspace">
                <article class="window">
                    {@render titleBar(markArt.diamond, "Incidents (5424)", "My Incs", false)}
                    <div class="body">
                        {@render strip(["My Incs", "My Tagged", "0 - All Events", "10AliDMS Snap", "3KSE562DS4"], "}", true)}
                        <div class="content">
                            <div class="scroller tall">
                                <table class="incidents">
                                    <colgroup><col class="c-eye" /><col class="c-g" /><col class="c-kind" /><col class="c-ref" /><col class="c-time" /><col /></colgroup>
                                    <thead>
                                        <tr>
                                            <th class="mid">{@render art(markArt.eyeHead, 32, 28)}</th>
                                            <th class="grade">G</th>
                                            <th class="mid">{@render art(markArt.bolts, 32, 28)}</th>
                                            <th><span class="sort">Reference<i>▼</i></span></th>
                                            <th>Time</th>
                                            <th>Type</th>
                                        </tr>
                                    </thead>
                                    <tbody>
                                        {#each incidents as [grade, no, date, time, type, tone]}
                                            <tr class={tone}>
                                                <td class="mid">{@render art(tone === "read" ? markArt.eyeOff : markArt.eyeOn, 32, 28)}</td>
                                                <td>{grade}</td>
                                                <td class="mid">{@render art(markArt.diamond, 32, 28)}</td>
                                                <td class="key"><b>{no}</b> - {date}</td>
                                                <td>{time}</td>
                                                <td class="last"><span class="clip">{type}</span></td>
                                            </tr>
                                        {/each}
                                    </tbody>
                                </table>
                                {@render vbar()}
                            </div>
                            {@render hbar("short")}
                            {@render footer()}
                        </div>
                    </div>
                </article>

                <article class="window">
                    {@render titleBar(markArt.gear, "Resources (100685)", "My Resources", false)}
                    <div class="body">
                        {@render strip(["My Resources", "0 - All", "4FXJMJYF6C", "AAAAtSceneResou", "All", "All Talkgroups"], "E", false)}
                        <div class="content">
                            <div class="scroller tall">
                                <table class="units">
                                    <colgroup><col class="c-call" /><col class="c-type" /><col class="c-status" /><col class="c-talk" /><col /></colgroup>
                                    <thead>
                                        <tr>
                                            <th class="wide"><span class="sort">Call Sign<i>▲</i></span></th>
                                            <th>Type</th>
                                            <th>Status</th>
                                            <th>Talkg...</th>
                                            <th>(</th>
                                        </tr>
                                    </thead>
                                    <tbody>
                                        {#each units as [call, kind, type, status, talk, tone]}
                                            <tr class={tone}>
                                                <td class="key inset">{call}</td>
                                                <td class="unit"><span>{@render art(unitArt[kind], 36, 24)}{type}</span></td>
                                                <td>{status}</td>
                                                <td>{talk}</td>
                                                <td class="last"></td>
                                            </tr>
                                        {/each}
                                    </tbody>
                                </table>
                                {@render vbar()}
                            </div>
                            {@render hbar("medium")}
                            {@render footer()}
                        </div>
                    </div>
                </article>

                <div class="stack">
                    <article class="window">
                        {@render titleBar(markArt.officer, "Police Workers (2833)", "My Workers", true)}
                        <div class="body">
                            {@render strip(["My Workers"], "All", false)}
                            <div class="content">
                                <div class="scroller low">
                                    <table class="workers">
                                        <colgroup><col class="c-id" /><col class="c-rank" /><col class="c-name" /><col class="c-name" /><col class="c-name" /><col /></colgroup>
                                        <thead>
                                            <tr>
                                                <th class="wide"><span class="sort">ID<i>▲</i></span></th>
                                                <th>Rank</th>
                                                <th>Name</th>
                                                <th>Status</th>
                                                <th>Call Sign</th>
                                                <th><span class="clip">Talkg</span></th>
                                            </tr>
                                        </thead>
                                        <tbody>
                                            {#each workers as [id, rank, name]}
                                                <tr>
                                                    <td class="key inset">{id}</td>
                                                    <td>{rank}</td>
                                                    <td>{name}</td>
                                                    <td>{#if id}<span class="clip duty"><b>11</b>Off Duty</span>{/if}</td>
                                                    <td></td>
                                                    <td class="last"></td>
                                                </tr>
                                            {/each}
                                        </tbody>
                                    </table>
                                    {@render vbar()}
                                </div>
                                {@render hbar("long")}
                                {@render footer(false)}
                            </div>
                        </div>
                    </article>

                    <article class="window log">
                        <header class="titlebar">
                            <h2 class="chip">{@render art(markArt.ticker, 32, 28)}Log Ticker</h2>
                        </header>
                        <div class="body">
                            {@render strip([], "", false)}
                            <div class="content">
                                {@render footer(false)}
                            </div>
                        </div>
                    </article>
                </div>
            </div>

            <div class="statusbar"><span class="tick"></span><button>ALL</button><span class="tick"></span></div>
        </div>
    </section>

    <section class="device modern">
        <div class="screen">
            <nav class="side">
                <button class="active" aria-label="Home">{@render icon("plug", "green")}</button>
                <button class="note" aria-label="Calls">{@render icon("phone")}</button>
                <button class="note" aria-label="Messages">{@render icon("chatIn")}</button>
                <button class="note" aria-label="Threads">{@render icon("chats")}</button>
                <button aria-label="Radio">{@render icon("radio", "pale")}</button>
                <button aria-label="Dispatch">{@render icon("route", "pale")}</button>
                <span class="fill"></span>
                <button aria-label="Teams">{@render icon("people", "pale")}</button>
                <button aria-label="Contacts">{@render icon("contact", "pale")}</button>
                <button aria-label="Broadcast">{@render icon("podcast", "pale")}</button>
                <button class="mic" aria-label="Microphone">{@render icon("mic")}</button>
            </nav>

            <div class="page">
                <header class="topbar">
                    <h1>Home</h1>
                    <a href="#info">{@render icon("doc", "pale")}Operational information</a>
                    <a href="#map">{@render icon("mapFold", "pale")}Map</a>
                    <button class="actions">Actions{@render icon("down", "blue", 20)}</button>
                </header>

                <div class="cards">
                    <section class="card comm">
                        <div class="cardhead">
                            <h2>Communication</h2>
                            <button aria-label="Filter">{@render icon("funnel", "blue")}</button>
                            <button class="push" aria-label="Collapse">{@render icon("collapse", "blue")}</button>
                        </div>
                        <div class="cardtabs" role="tablist">
                            {#each commTabs as name}
                                <button role="tab" aria-selected={commTab === name} class:on={commTab === name} onclick={() => (commTab = name)}>{name}</button>
                            {/each}
                        </div>
                        <div class="list">
                            <table class="directory">
                                <colgroup><col class="d-icon" /><col class="d-name" /><col class="d-act" /><col class="d-act" /><col /></colgroup>
                                <thead>
                                    <tr>
                                        <th class="lead">{@render icon("grid")}</th>
                                        <th class="div">Name</th>
                                        <th class="mid div">{@render icon("phone")}</th>
                                        <th class="mid div">{@render icon("message")}</th>
                                        <th class="div">Attributes</th>
                                    </tr>
                                </thead>
                                <tbody>
                                    {#each directory as [name, area]}
                                        <tr>
                                            <td class="lead">{@render icon("person", "pale")}</td>
                                            <td>{name}</td>
                                            <td class="mid">{@render icon("phone", "blue")}</td>
                                            <td class="mid">{@render icon("message", "blue")}</td>
                                            <td>{area}</td>
                                        </tr>
                                    {/each}
                                </tbody>
                            </table>
                            <span class="thumb"></span>
                        </div>
                    </section>

                    <div class="middle">
                        <section class="card events">
                            <div class="cardhead">
                                <h2>Events</h2>
                                <button class="push" aria-label="Collapse">{@render icon("collapse", "blue")}</button>
                            </div>
                            <div class="list">
                                <table>
                                    <colgroup><col class="e-icon" /><col class="e-ref" /><col class="e-eye" /><col class="e-warn" /><col class="e-status" /><col class="e-who" /><col class="e-grade" /><col class="e-type" /><col class="e-title" /><col /></colgroup>
                                    <thead>
                                        <tr>
                                            <th class="lead"><span class="sort">{@render icon("grid")}<i class="pair">▲<br />▼</i></span></th>
                                            <th class="div"><span class="sort">Reference<i class="pair">▲<br /><b>▼</b></i></span></th>
                                            <th class="mid">{@render icon("eye")}</th>
                                            <th class="mid">{@render icon("triangle", "ink", 24)}</th>
                                            <th class="div">Status</th>
                                            <th class="mid">{@render icon("person")}</th>
                                            <th class="div">Grade</th>
                                            <th class="div">Event type</th>
                                            <th class="div">Title</th>
                                            <th class="div">Location</th>
                                        </tr>
                                    </thead>
                                    <tbody>
                                        {#each events as [ref, eye, warn, status, who, grade, type, title, area]}
                                            <tr>
                                                <td class="lead">{@render icon("siren", "red")}</td>
                                                <td><a href="#event-{ref}">{ref}</a> - 100614</td>
                                                <td class="mid">{@render icon("eye", eye)}</td>
                                                <td class="mid">
                                                    {#if warn}
                                                        <svg class="line red" width="24" height="24" viewBox="0 0 24 24"><path d={line.triangle} /><text x="12" y="19" font-size="12" font-weight="700" text-anchor="middle">{warn}</text></svg>
                                                    {/if}
                                                </td>
                                                <td>{status}</td>
                                                <td class="mid">{#if who}{@render icon("person", who)}{:else}-{/if}</td>
                                                <td>{grade}</td>
                                                <td>{type}</td>
                                                <td>{title}</td>
                                                <td>{area}</td>
                                            </tr>
                                        {/each}
                                    </tbody>
                                </table>
                                <span class="thumb"></span>
                            </div>
                        </section>

                        <section class="card fleet">
                            <div class="cardhead">
                                <h2>Resources</h2>
                                <button class="push" aria-label="Collapse">{@render icon("collapse", "blue")}</button>
                            </div>
                            <div class="cardtabs" role="tablist">
                                {#each fleetTabs as name}
                                    <button role="tab" aria-selected={fleetTab === name} class:on={fleetTab === name} onclick={() => (fleetTab = name)}>{name}</button>
                                {/each}
                            </div>
                            <div class="list">
                                <table>
                                    <colgroup><col class="e-icon" /><col class="e-ref" /><col class="f-wide" /><col class="f-wide" /><col class="f-crew" /><col class="f-wide" /><col class="f-time" /><col /></colgroup>
                                    <thead>
                                        <tr>
                                            <th class="lead">{@render icon("grid")}</th>
                                            <th class="div">Call sign</th>
                                            <th>Resource type</th>
                                            <th>Control group</th>
                                            <th class="div">Crew</th>
                                            <th>Incident assgined</th>
                                            <th class="div">Time left</th>
                                            <th class="div">Status</th>
                                        </tr>
                                    </thead>
                                    <tbody>
                                        {#each fleet as [kind, call, type, group, crew, incident, time, status, tone]}
                                            <tr>
                                                <td class="lead">{@render icon(kind, tone)}</td>
                                                <td>{call}</td>
                                                <td>{type}</td>
                                                <td>{group}</td>
                                                <td>{crew}</td>
                                                <td>{incident}</td>
                                                <td>{time}</td>
                                                <td class="state {tone}">{status}</td>
                                            </tr>
                                        {/each}
                                    </tbody>
                                </table>
                                <span class="thumb"></span>
                            </div>
                        </section>
                    </div>

                    <section class="card support">
                        {@render icon("search", "pale", 18)}
                        <div>
                            <h2>SUPPORTING INFO</h2>
                            <p>Results found</p>
                        </div>
                    </section>
                </div>
            </div>
        </div>
    </section>
</main>

<style>
    :global(body) {
        background: #efefef;
    }

    .stage {
        min-height: 100vh;
        box-sizing: border-box;

        display: grid;
        grid-template-columns: 310fr 1356fr 508fr 1356fr 310fr;
        align-content: center;
        align-items: start;

        font-family: "Noto Sans", "Open Sans", sans-serif;
        color: #3d3d3d;
    }

    .stage * {
        box-sizing: border-box;
    }

    button {
        margin: 0;
        padding: 0;
        border: 0;
        background: none;
        font: inherit;
        color: inherit;
        cursor: pointer;
    }

    h1,
    h2,
    p {
        margin: 0;
    }

    i {
        font-style: normal;
    }

    a {
        color: inherit;
        text-decoration: none;
    }

    svg {
        display: block;
        flex: none;
    }

    table {
        width: 100%;
        table-layout: fixed;
        border-collapse: separate;
        border-spacing: 0;
    }

    th,
    td {
        padding: 0;
        text-align: left;
        white-space: nowrap;
    }

    .device {
        position: relative;
        grid-row: 1;
        padding: 32px;
    }

    /* tinted glass frame around each screen */
    .device::before {
        content: "";
        position: absolute;
        inset: 0;
        border-radius: 64px;
        background: #d7e0ed;
        mix-blend-mode: multiply;
    }

    .legacy {
        grid-column: 2 / 4;
    }

    .modern {
        grid-column: 3 / 5;
        margin-top: 342px;
    }

    .screen {
        position: relative;
        border-radius: 32px;
        overflow: hidden;
    }

    /* ---- older dashboard ---- */

    .legacy .screen {
        background: #e9f2f5;
        color: #4a4a4a;
    }

    .tabs {
        display: flex;
        align-items: flex-end;
        height: 32px;
        background: #abc9d5;
        border-bottom: 1px solid #8f9a9e;
        font-size: 14px;
        font-weight: 500;
    }

    .tabs button {
        height: 27px;
        padding-bottom: 3px;
        border: 2px solid #a2b0b5;
        border-bottom: 0;
        border-radius: 6px 6px 0 0;
        color: #fff;
    }

    .tabs .app {
        width: 70px;
        margin-right: 4px;
        padding-bottom: 0;
        background: #b5b5b5;
        border-color: #a5a5a5;
    }

    .tabs .home {
        width: 177px;
        margin: 0 13px -1px 0;
        background: #fff;
        border-color: #b8c3c7;
        color: #3a7884;
    }

    .tabs .view-tab {
        width: 178px;
    }

    .corner {
        display: flex;
        align-items: center;
        gap: 13px;
        height: 26px;
        margin: 0 -6px 0 auto;
    }

    .ribbon {
        display: flex;
        height: 109px;
        background: linear-gradient(#fff 40%, #e5e8ee);
        border-bottom: 2px solid #a9adb1;
        font-size: 13px;
        line-height: 17px;
    }

    .group {
        display: flex;
        flex-direction: column;
        padding-top: 10px;
    }

    .group p {
        margin-top: 6px;
        text-align: center;
        color: #909398;
    }

    .tools {
        display: grid;
        height: 71px;
    }

    .tools.new {
        grid-template-columns: 72px 85px 101px 52px 88px 82px;
    }

    .tools.prompts {
        grid-template-columns: 83px;
    }

    .tools.control {
        grid-template-columns: 88px 88px 66px 96px 73px 108px;
    }

    .tools.dashboard {
        grid-template-columns: 110px 106px;
    }

    .tools.apps {
        grid-template-columns: 88px 82px;
    }

    .tools.connection {
        grid-template-columns: 92px;
    }

    .tool {
        display: flex;
        flex-direction: column;
        align-items: center;
        white-space: nowrap;
    }

    .tool svg {
        margin-bottom: 3px;
    }

    .tool.off {
        color: #a9abae;
    }

    .tool i {
        margin-left: 4px;
        font-size: 8px;
    }

    .rule {
        width: 2px;
        height: 82px;
        margin-top: 14px;
        background: #aeb1b4;
    }

    .workspace {
        display: grid;
        grid-template-columns: repeat(3, 1fr);
        gap: 15px;
        padding: 12px 8px 13px 12px;
    }

    .stack {
        display: flex;
        flex-direction: column;
        gap: 14px;
        min-width: 0;
    }

    .window {
        display: flex;
        flex-direction: column;
        min-width: 0;
        background: #fff;
        border: 1px solid #979d9f;
        border-radius: 8px;
        overflow: hidden;
    }

    .titlebar {
        display: flex;
        align-items: center;
        height: 47px;
        padding: 0 13px 1px;
        background: linear-gradient(#aac9d4, #98b9c6);
        border-bottom: 1px solid #7f989f;
        font-size: 17px;
    }

    .chip {
        display: flex;
        align-items: center;
        gap: 7px;
        height: 32px;
        padding: 0 14px 0 8px;
        background: #fff;
        border-radius: 6px 0 0 6px;
        font-size: 17px;
        font-weight: 600;
        white-space: nowrap;
    }

    .chip-view {
        height: 32px;
        padding: 0 12px;
        background: #c2d6de;
        border-radius: 0 6px 6px 0;
        color: #f0563f;
        white-space: nowrap;
    }

    .more {
        display: flex;
        align-items: center;
        flex: none;
        width: 46px;
        height: 31px;
        margin-left: 15px;
        border: 1px solid #8d9496;
        border-radius: 5px;
        background: linear-gradient(#f2f2f2, #cfd2d4);
    }

    .more span {
        width: 28px;
        border-right: 1px solid #a0a5a8;
    }

    .more i {
        width: 16px;
        font-size: 11px;
    }

    .controls {
        display: flex;
        gap: 8px;
        margin-left: auto;
    }

    .controls button {
        display: grid;
        place-items: center;
        width: 30px;
        height: 31px;
        background: #fff;
        border: 1px solid #8fa2aa;
        border-radius: 6px;
    }

    .controls .ghost {
        background: #a9c5cf;
        border-color: #c3d8df;
    }

    .body {
        display: flex;
        flex: 1;
    }

    .strip {
        display: flex;
        flex-direction: column;
        align-items: center;
        flex: none;
        gap: 26px;
        width: 32px;
        padding: 13px 2px 0 0;
        border-right: 1px solid #cfd3d5;
        font-size: 17px;
        line-height: 22px;
    }

    .strip path,
    .knob path,
    .expand path {
        fill: none;
        stroke: #4a4a4a;
        stroke-width: 2;
    }

    .view {
        writing-mode: vertical-rl;
        transform: rotate(180deg);
        white-space: nowrap;
    }

    .view.current {
        color: #f0563f;
    }

    .view.faded {
        color: #ccc;
    }

    .pinned {
        width: 20px;
        margin: -11px 0 -11px;
        padding: 14px 0;
        border: solid #cfd3d5;
        border-width: 1px 0;

        display: flex;
        justify-content: center;
    }

    .strip .fav {
        display: grid;
        place-items: center;
        flex: none;
        width: 24px;
        height: 46px;
        border: 1px solid #8d9496;
        border-radius: 5px;
        background: linear-gradient(90deg, #f2f2f2, #cfd2d4);
    }

    .strip .fav path {
        fill: #f0c64a;
        stroke-width: 1;
    }

    .content {
        display: flex;
        flex-direction: column;
        flex: 1;
        min-width: 0;
    }

    .scroller {
        position: relative;
        margin: 13px 14px 6px;
        overflow: hidden;
    }

    .scroller.tall {
        height: 656px;
    }

    .scroller.low {
        height: 115px;
    }

    .legacy table {
        font-size: 15px;
    }

    table.incidents {
        height: 671px;
    }

    table.units {
        height: 657px;
    }

    .workers td {
        height: 37px;
    }

    .legacy th {
        height: 31px;
        padding-left: 8px;
        background: linear-gradient(#f1f1f1, #cacdce);
        border: solid #8d9294;
        border-width: 1px 0;
        border-right: 1px dashed #999;
        font-size: 16px;
        font-weight: 500;
        color: #333;
    }

    .legacy th:first-child {
        border-left: 1px solid #8d9294;
        border-radius: 7px 0 0 7px;
    }

    .legacy th:last-child {
        border-right: 1px solid #8d9294;
        border-radius: 0 7px 7px 0;
    }

    .legacy th.grade {
        padding-left: 14px;
        font-size: 19px;
        font-weight: 700;
    }

    .legacy th.wide {
        padding-left: 12px;
    }

    .sort {
        display: flex;
        align-items: center;
        justify-content: space-between;
        padding-right: 5px;
    }

    .sort i {
        font-size: 11px;
        color: #909090;
    }

    .legacy td {
        padding-left: 14px;
        border-right: 1px dashed #c4c4c4;
    }

    .legacy td.last {
        border-right: 0;
    }

    .legacy .mid {
        padding-left: 0;
    }

    .legacy .mid svg {
        margin: 0 auto;
    }

    .key {
        background: #dcdcdc;
    }

    .key b {
        color: #2b70dc;
        font-size: 16px;
    }

    .legacy td.inset {
        padding-left: 12px;
        border-left: 7px solid #fff;
        font-size: 16px;
        font-weight: 600;
    }

    .alert {
        color: #ef3e38;
        font-weight: 600;
    }

    .plain {
        font-weight: 600;
    }

    tr.blue {
        color: #2b70dc;
    }

    tr.green {
        color: #228063;
    }

    .clip {
        display: block;
        margin-right: 5px;
        overflow: hidden;
    }

    .incidents .clip {
        margin-right: 25px;
    }

    .legacy td.unit {
        padding-left: 8px;
    }

    .unit span {
        display: flex;
        align-items: center;
        gap: 6px;
    }

    .duty b {
        margin-right: 13px;
    }

    .c-eye {
        width: 53px;
    }

    .c-g {
        width: 57px;
    }

    .c-kind {
        width: 50px;
    }

    .c-ref {
        width: 127px;
    }

    .c-time {
        width: 71px;
    }

    .c-call {
        width: 132px;
    }

    .c-type {
        width: 190px;
    }

    .c-status,
    .c-id {
        width: 107px;
    }

    .c-talk {
        width: 76px;
    }

    .c-rank {
        width: 63px;
    }

    .c-name {
        width: 101px;
    }

    .vbar {
        position: absolute;
        top: 38px;
        right: 0;
        bottom: 0;
        width: 21px;

        display: flex;
        flex-direction: column;
        border: 1px solid #9a9fa1;
        border-radius: 6px;
        background: #fff;
    }

    .knob {
        display: grid;
        place-items: center;
        width: 20px;
        height: 20px;
        border: 1px solid #9a9fa1;
        border-radius: 5px;
        background: linear-gradient(#f5f5f5, #d5d5d5);
    }

    .vbar .knob {
        width: 19px;
    }

    .vbar .grip {
        width: 17px;
        height: 8px;
        margin: 3px 1px;
        border: 1px solid #9a9fa1;
        border-radius: 4px;
    }

    .vbar .end {
        margin-top: auto;
    }

    .hbar {
        display: flex;
        align-items: center;
        height: 21px;
        margin: 0 41px 14px 14px;
        border: 1px solid #8d9294;
        border-radius: 6px;
        background: #fff;
    }

    .hbar .grip {
        height: 17px;
        margin-left: 2px;
        border: 1px solid #9a9fa1;
        border-radius: 7px;
        background: linear-gradient(#f8f8f8, #d8d8d8);
    }

    .short .grip {
        width: 84px;
    }

    .medium .grip {
        width: 117px;
    }

    .long .grip {
        width: 276px;
    }

    .hbar .end {
        margin-left: auto;
    }

    .foot {
        display: flex;
        align-items: flex-start;
        justify-content: flex-end;
        min-height: 58px;
        padding: 12px 15px;
        border-top: 1px solid #c4c8ca;
    }

    .log {
        flex: 1;
    }

    .log .titlebar {
        background: linear-gradient(#4f9ae2, #3f89d3);
    }

    .log .chip {
        width: 300px;
        background: #a9cbef;
        border: 2px solid #fff;
        border-radius: 6px;
    }

    .log .content {
        justify-content: flex-end;
    }

    .statusbar {
        display: flex;
        align-items: center;
        justify-content: center;
        gap: 13px;
        height: 45px;
        padding: 0 0 4px 4px;
        background: #dcc45c;
        border: solid #4d4a3a;
        border-width: 1px 0;
    }

    .statusbar button {
        height: 27px;
        padding: 0 6px;
        border-radius: 5px;
        background: #2b70dc;
        color: #fff;
        font-size: 16px;
        font-weight: 700;
    }

    .tick {
        width: 2px;
        height: 27px;
        background: #b39c44;
    }

    /* ---- newer dashboard ---- */

    .modern .screen {
        display: flex;
        background: #edf1f6;
        font-size: 13px;
    }

    .line {
        fill: none;
        stroke: currentColor;
        stroke-width: 2;
        stroke-linejoin: round;
    }

    .line text {
        fill: currentColor;
        stroke: none;
    }

    .line.ink {
        color: #333;
    }

    .line.pale {
        color: #a3c2cf;
    }

    .line.blue,
    .state.blue {
        color: #1f6ee2;
    }

    .line.green,
    .state.green {
        color: #1f8a66;
    }

    .line.red {
        color: #cf2a27;
    }

    .side {
        display: flex;
        flex-direction: column;
        align-items: center;
        gap: 5px;
        width: 61px;
        padding: 14px 0 16px;
        background: #fff;
    }

    .side button {
        position: relative;
        display: grid;
        place-items: center;
        width: 45px;
        height: 44px;
    }

    .side .active {
        margin-bottom: 19px;
        border-radius: 8px;
        background: #e8eff2;
    }

    .side .note::after {
        content: "";
        position: absolute;
        top: 11px;
        right: 11px;
        width: 6px;
        height: 6px;
        border-radius: 50%;
        background: #d5a94e;
    }

    .side .fill {
        flex: 1;
    }

    .side .mic {
        margin-top: 17px;
    }

    .page {
        flex: 1;
        min-width: 0;
        padding: 0 38px 25px 34px;
    }

    .topbar {
        display: flex;
        align-items: center;
        height: 96px;
        padding-bottom: 16px;
        font-weight: 600;
    }

    .topbar h1 {
        margin-right: auto;
        font-size: 22px;
        font-weight: 500;
        color: #333;
    }

    .topbar a {
        display: flex;
        align-items: center;
        gap: 8px;
        margin-right: 28px;
    }

    .actions {
        display: flex;
        align-items: center;
        justify-content: space-between;
        width: 100px;
        height: 38px;
        margin-left: 6px;
        padding: 0 12px 0 10px;
        border: 2px solid #1f6ee2;
        border-radius: 7px;
        color: #1f6ee2;
    }

    .cards {
        display: grid;
        grid-template-columns: 550fr 830fr 272fr;
        align-items: start;
        gap: 8px;
    }

    .card {
        min-width: 0;
        background: #fff;
        border-radius: 8px;
        box-shadow: 0 8px 24px rgba(140, 155, 185, 0.16);
    }

    .card h2 {
        font-size: 15px;
        font-weight: 500;
        color: #333;
    }

    .comm,
    .fleet {
        padding: 0 16px 7px 15px;
    }

    .events {
        height: 442px;
        padding: 0 17px 0 15px;
        overflow: hidden;
    }

    .middle {
        display: grid;
        gap: 8px;
        min-width: 0;
    }

    .cardhead {
        display: flex;
        align-items: center;
        gap: 8px;
        height: 45px;
    }

    .events .cardhead {
        height: 46px;
    }

    .push {
        margin: 0 -2px 0 auto;
    }

    .cardtabs {
        display: flex;
        gap: 4px;
        height: 30px;
        border-bottom: 2px solid #eef1f6;
        font-size: 12px;
        font-weight: 500;
    }

    .cardtabs button {
        height: 30px;
        padding: 0 11px;
        border: 1px solid #eef1f6;
        border-bottom: 0;
        border-radius: 4px 4px 0 0;
        background: #eef1f6;
    }

    .cardtabs .on {
        background: #fff;
        color: #1f6ee2;
    }

    .list {
        position: relative;
    }

    .thumb {
        position: absolute;
        top: 45px;
        right: -9px;
        width: 2px;
        height: 85px;
        border-radius: 1px;
        background: #e2e6ee;
    }

    .modern th {
        height: 44px;
        padding-left: 8px;
        border-bottom: 2px solid #ececee;
        font-size: 12px;
        font-weight: 600;
    }

    .modern .events th {
        height: 45px;
    }

    .modern td {
        height: 45px;
        padding-left: 8px;
    }

    .modern tbody tr:nth-child(odd) {
        background: #f7f7f7;
    }

    .modern .lead {
        padding-left: 19px;
    }

    .modern .mid {
        padding-left: 0;
        text-align: center;
    }

    .modern .mid svg {
        margin: 0 auto;
    }

    /* short column ticks that stop above the header line */
    .div {
        background: linear-gradient(#f0f1f4, #f0f1f4) right center / 1px 24px no-repeat;
    }

    .events td a {
        color: #1f6ee2;
        font-weight: 600;
    }

    .sort .pair {
        font-size: 8px;
        line-height: 8px;
        color: #dfe2e8;
    }

    .pair b {
        color: #1f6ee2;
    }

    .d-icon {
        width: 62px;
    }

    .d-name {
        width: 163px;
    }

    .d-act {
        width: 64px;
    }

    .e-icon {
        width: 62px;
    }

    .e-ref {
        width: 98px;
    }

    .e-eye {
        width: 43px;
    }

    .e-warn {
        width: 47px;
    }

    .e-status {
        width: 53px;
    }

    .e-who {
        width: 45px;
    }

    .e-grade {
        width: 60px;
    }

    .e-type {
        width: 141px;
    }

    .e-title {
        width: 125px;
    }

    .f-wide {
        width: 125px;
    }

    .f-crew {
        width: 62px;
    }

    .f-time {
        width: 76px;
    }

    .support {
        display: flex;
        align-items: center;
        gap: 7px;
        height: 58px;
        padding-left: 11px;
        font-size: 12px;
        line-height: 17px;
    }

    .support h2 {
        font-size: 11px;
        font-weight: 700;
    }

    .support p {
        color: #1f8a66;
    }
</style>
